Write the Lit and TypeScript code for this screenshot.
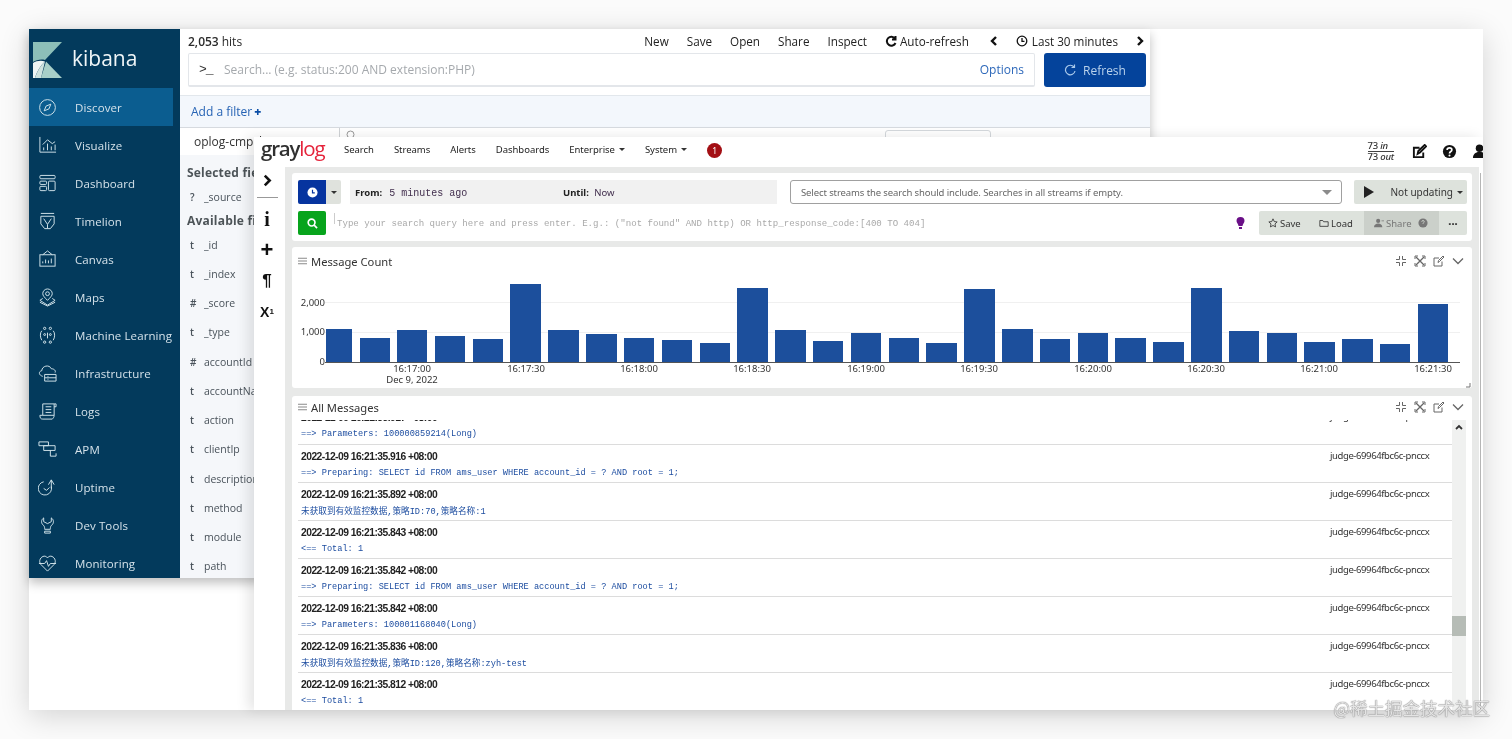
import { LitElement, html, css, svg } from "lit";
import { customElement } from "lit/decorators.js";

const navIcons: Record<string, any> = {
  Discover: svg`<circle cx="10" cy="10" r="8.3"/><path d="M13.5 6.5 11.5 11.5 6.5 13.5 8.5 8.5Z"/>`,
  Visualize: svg`<path d="M2 1v16h17M5 9l5-5 5 4 3-2M6 15v-3M10 15V8M14 15v-4M18 15V9"/>`,
  Dashboard: svg`<rect x="2" y="1.5" width="16" height="3.5" rx="1"/><rect x="2" y="7.5" width="7" height="3.5" rx="1"/><rect x="2" y="13" width="7" height="4.5" rx="1"/><rect x="11" y="7.5" width="7" height="10" rx="1"/>`,
  Timelion: svg`<path d="M3 1.5h14M3 4.5h14v8l-4 5H7l-4-5zM6 7l4 6 4-6M10 13v4"/>`,
  Canvas: svg`<rect x="2" y="5" width="16" height="12"/><path d="M5 5l5-4 5 4M5 14v-2M8 14v-4M11 14v-3M14 14V9"/>`,
  Maps: svg`<circle cx="10" cy="6" r="2"/><path d="M10 13C7 10 5 8 5 6a5 5 0 0 1 10 0c0 2-2 4-5 7ZM5 11l-3 2 8 5 8-5-3-2M2 15l8 4 8-4"/>`,
  "Machine Learning": svg`<circle cx="7" cy="2.5" r="1.2"/><circle cx="13" cy="2.5" r="1.2"/><circle cx="7" cy="17" r="1.2"/><circle cx="13" cy="17" r="1.2"/><circle cx="7" cy="9" r="1"/><circle cx="13" cy="9" r="1"/><path d="M4 5C2 7 2 12 4 15M16 5c2 2 2 7 0 10M10 7v6"/>`,
  Infrastructure: svg`<path d="M5 13C1 12 0 8 4 7c0-5 8-7 10-2 3 0 5 2 4 4M7 11h12v7H7zM7 14.500h12M10 13h1M10 16h1"/>`,
  Logs: svg`<path d="M5 14V2h12v12M5 14H2c0 3 1 4 3 4h10c1-1 2-2 2-4H5M8 5h6M8 8h6M8 11h6M17 2h2v3h-2"/>`,
  APM: svg`<path d="M1 2h10v4H1zM6 6h12v5H6zM13 11v6h6v-3"/>`,
  Uptime: svg`<path d="M14 9a7 7 0 1 1-8-5M11 7l3-5 3 5M14 2v9M6 11l3 2 3-3"/>`,
  "Dev Tools": svg`<path d="M6 2C3 4 3 8 6 10c1 1 1 3 1 4h6c0-1 0-3 1-4 3-2 3-6 0-8v4l-4 2-4-2zM7 16h6v2H7z"/>`,
  Monitoring: svg`<path d="M10 18 3 11C-1 6 6-1 10 4c4-5 11 2 7 7l-7 7ZM1 10h6l2-3 2 6 2-3h6"/>`,
};
const navItems = Object.keys(navIcons);

const fields: [string, string][] = [
  ["t", "_id"], ["t", "_index"], ["#", "_score"], ["t", "_type"], ["#", "accountId"], ["t", "accountName"],
  ["t", "action"], ["t", "clientIp"], ["t", "description"], ["t", "method"], ["t", "module"], ["t", "path"],
];

const bars: [number, number, number][] = [
  [326,26,329],[360,30,338],[397,30,330],[435,30,336],[473,30,339],[510,31,284],[548,31,330],[586,31,334],[624,30,338],[662,30,340],
  [700,30,343],[737,31,288],[775,31,330],[813,30,341],[851,30,333],[889,30,338],[926,31,343],[964,31,289],[1002,31,329],[1040,30,339],
  [1078,30,333],[1115,31,338],[1153,31,342],[1191,31,288],[1229,30,331],[1267,30,333],[1304,31,342],[1342,31,339],[1380,30,344],[1418,30,304],
];
const ticks: [string, number][] = [
  ["16:17:00",412],["16:17:30",526],["16:18:00",639],["16:18:30",752],["16:19:00",866],["16:19:30",979],["16:20:00",1093],["16:20:30",1206],["16:21:00",1319],["16:21:30",1433],
];
const prep = "==> Preparing: SELECT id FROM ams_user WHERE account_id = ? AND root = 1;";
const rows: [string, string][] = [
  ["2022-12-09 16:21:35.917 +08:00", "==> Parameters: 100000859214(Long)"],
  ["2022-12-09 16:21:35.916 +08:00", prep],
  ["2022-12-09 16:21:35.892 +08:00", "未获取到有效监控数据,策略ID:70,策略名称:1"],
  ["2022-12-09 16:21:35.843 +08:00", "<== Total: 1"],
  ["2022-12-09 16:21:35.842 +08:00", prep],
  ["2022-12-09 16:21:35.842 +08:00", "==> Parameters: 100001168040(Long)"],
  ["2022-12-09 16:21:35.836 +08:00", "未获取到有效监控数据,策略ID:120,策略名称:zyh-test"],
  ["2022-12-09 16:21:35.812 +08:00", "<== Total: 1"],
];

const burger = html`<svg class="burger" viewBox="0 0 10 8"><path d="M0 1h10M0 4h10M0 7h10"/></svg>`;
const tools = html`<div class="tools">
  <svg viewBox="0 0 12 12"><path d="M4.500 1v3.500H1M7.500 1v3.500H11M4.500 11V7.500H1M7.500 11V7.500H11"/></svg>
  <svg viewBox="0 0 12 12"><path d="M2 2l8 8M10 2l-8 8" stroke-width="1.300"/><path d="M1 1h3M1 1v3M11 1H8M11 1v3M1 11h3M1 11V8M11 11H8M11 11V8"/></svg>
  <svg viewBox="0 0 12 12"><path d="M9 6.500V11H1V3h5M5 7.500 5.500 5.500 10 1l1 1-4.500 4.500z"/></svg>
  <svg viewBox="0 0 12 12"><path d="M1 3.500l5 5 5-5" stroke-width="1.300"/></svg>
</div>`;

@customElement("app-root")
export class AppRoot extends LitElement {
  static styles = css`
    :host { display: block; height: 739px; background: #fff; overflow: hidden; }
    * { box-sizing: border-box; }
    .stage { position: relative; width: 1512px; height: 739px; filter: blur(0.5px); background: #fbfbfb; font-family: "Open Sans", sans-serif; }
    .sheet { position: absolute; left: 29px; top: 29px; width: 1454px; height: 681px; background: #fff; box-shadow: 0 6px 28px rgba(0,0,0,.16); }

    .kibana { position: absolute; left: 29px; top: 29px; width: 1121px; height: 549px; display: flex; background: #fff; box-shadow: 0 5px 10px rgba(0,0,0,.25); overflow: hidden; }
    .side { width: 151px; background: #033a5c; color: #d5e2ea; flex: none; }
    .brand { height: 59px; display: flex; align-items: center; gap: 9px; padding: 0 0 0 4px; font-family: "Open Sans", sans-serif; font-size: 21px; font-weight: 500; color: #f0f6f8; }
    .brand svg { width: 30px; height: 36px; flex: none; margin-top: 2px; }
    .brand span { margin-top: -1px; }
    .nav-item { height: 38px; width: 144px; display: flex; align-items: center; white-space: nowrap; font-size: 11.500px; padding-left: 9px; gap: 18px; letter-spacing: .1px; }
    .nav-item.active { background: #0b5d90; }
    .nav-item svg { width: 19px; height: 19px; fill: none; stroke: #d5e6ec; stroke-width: 1; flex: none; }

    .kmain { flex: 1; min-width: 0; display: flex; flex-direction: column; }
    .ktop { height: 66px; padding: 0 4px 0 8px; display: grid; grid-template-columns: 1fr 102px; grid-template-rows: 24px 34px; column-gap: 9px; }
    .hits { font-size: 12px; color: #2a2a2a; display: flex; align-items: center; }
    .hits b { font-weight: 600; margin-right: 3px; }
    .menu { grid-column: 1 / 3; display: grid; grid-template-columns: auto 1fr; align-items: center; }
    .menu-links { display: flex; justify-content: flex-end; align-items: center; gap: 18px; font-size: 11.700px; color: #222; }
    .menu-links svg { width: 12px; height: 12px; fill: none; stroke: #111; stroke-width: 2; flex: none; }
    .m-icon { display: flex; align-items: center; gap: 3px; }
    .menu-links .back { margin-left: 1px; }
    .menu-links .range-t { margin-left: -2px; gap: 4px; }
    .menu-links .fwd { margin-left: -2px; }
    .kquery { border: 1px solid #e3e6ea; border-bottom-width: 2px; border-radius: 2px; background: #fff; display: flex; align-items: center; padding: 0 10px; font-size: 12px; color: #a5a9ad; }
    .kquery .prompt { color: #333; font-family: "Liberation Mono", monospace; font-size: 13px; width: 25px; letter-spacing: -1px; }
    .kquery .opt { margin-left: auto; color: #2d68ba; }
    .refresh { background: #04439b; color: #b9d2ec; border-radius: 3px; display: flex; align-items: center; justify-content: center; gap: 7px; font-size: 12px; }
    .refresh svg { width: 12px; height: 12px; fill: none; stroke: #a8c8ea; stroke-width: 1.200; }
    .filters { height: 33px; background: #f3f7fc; border-top: 1px solid #e2e7ec; border-bottom: 1px solid #d6dadf; display: flex; align-items: center; padding-left: 11px; font-size: 12px; color: #2663b4; flex: none; }
    .filters b { font-weight: 800; margin-left: 2px; color: #0a4da5; }
    .kbody { flex: 1; display: flex; min-height: 0; }
    .fields { width: 160px; flex: none; background: #f5f7fa; overflow: hidden; border-right: 1px solid #d0d3d6; }
    .index { height: 27px; background: #fff; display: flex; align-items: center; padding-left: 14px; font-size: 12px; color: #333; white-space: nowrap; overflow: hidden; }
    .fh { font-size: 12px; font-weight: 700; color: #4d5458; padding-left: 7px; height: 23px; display: flex; align-items: center; white-space: nowrap; letter-spacing: .2px; }
    .fh.sel-h { margin-top: 6px; }
    .fh.av-h { height: 20px; }
    .field { height: 29.250px; display: flex; align-items: center; font-size: 10.500px; color: #49525a; padding-left: 10px; white-space: nowrap; }
    .field.src { height: 26px; }
    .field i { font-style: normal; width: 14px; flex: none; font-weight: 600; font-size: 10px; }
    .kright { flex: 1; padding: 2px 0 0 6px; display: flex; align-items: flex-start; }
    .kright svg { width: 10px; height: 10px; fill: none; stroke: #999; }
    .ghost { width: 106px; height: 10px; border: 1px solid #d4d8dc; border-radius: 3px; margin-left: 529px; }

    .gl { position: absolute; left: 254px; top: 137px; width: 1229px; height: 573px; background: #fff; display: flex; flex-direction: column; box-shadow: -6px 0 12px rgba(0,0,0,.1); overflow: hidden; }
    .glnav { height: 30px; flex: none; display: flex; align-items: center; padding: 0 0 5px 7px; font-size: 9.500px; color: #222; font-family: "Noto Sans", sans-serif; }
    .gllogo { font-family: "Open Sans", sans-serif; font-size: 20.500px; line-height: 22px; font-weight: 600; letter-spacing: -1.200px; color: #303030; width: 83px; margin-top: -3px; }
    .gllogo span { color: #e5243b; font-weight: 400; }
    .links { display: flex; gap: 20px; align-items: center; letter-spacing: -.03px; }
    .caret::after { content: ""; display: inline-block; margin-left: 4px; vertical-align: 2px; border: 3px solid transparent; border-top-color: #333; border-bottom: 0; }
    .badge { width: 15px; height: 15px; border-radius: 50%; background: #a30f14; color: #fff; font-size: 8.500px; display: flex; align-items: center; justify-content: center; margin-top: 2px; }
    .navr { margin-left: auto; display: flex; align-items: center; gap: 15px; margin-right: -4px; margin-top: 4px; }
    .thru { font-size: 9.500px; line-height: 10px; font-weight: 500; text-align: left; margin-right: 3px; color: #333; letter-spacing: -.2px; }
    .thru em { font-style: italic; }
    .thru div:first-child { border-bottom: 1px solid #444; }
    .navr svg { width: 15px; height: 15px; flex: none; }

    .glbody { flex: 1; display: flex; min-height: 0; }
    .rail { width: 31px; flex: none; display: flex; flex-direction: column; align-items: center; color: #111; padding-right: 5px; line-height: 1; }
    .rail > * { height: 31px; display: flex; align-items: center; justify-content: center; font-weight: 700; }
    .rail svg { width: 13px; height: 13px; fill: none; stroke: #111; stroke-width: 2.400; }
    .rail .first { border-bottom: 1px solid #999; margin-bottom: 6px; width: 21px; padding-bottom: 4px; flex: none; }
    .rail .ri { font-size: 20px; font-family: "Liberation Serif", serif; height: 30px; }
    .rail .pl { font-size: 22px; font-family: "Liberation Sans", sans-serif; }
    .rail .pa { font-size: 17px; font-family: "Liberation Sans", sans-serif; }
    .rail .x { font-size: 14px; font-family: "Liberation Sans", sans-serif; }
    .rail .x sub { font-size: 8px; vertical-align: -2px; line-height: 0; }

    .glmain { flex: 1; min-width: 0; background: #e8e9e8; padding: 6px 7px 0 7px; border-right: 4px solid #fff; position: relative; display: flex; flex-direction: column; }
    .card { background: #fff; border-radius: 3px; margin-bottom: 6px; }
    .qcard { height: 68px; padding: 7px 5px 0 6px; display: flex; flex-direction: column; gap: 7px; }
    .qrow { height: 24px; display: flex; align-items: stretch; }
    .btn-b { width: 28px; background: #06349f; display: flex; align-items: center; justify-content: center; border-radius: 2px 0 0 2px; }
    .btn-b svg, .btn-g svg { width: 11px; height: 11px; }
    .btn-c { width: 15px; background: #dfe2dd; display: flex; align-items: center; justify-content: center; border-radius: 0 2px 2px 0; }
    .btn-c::after { content: ""; border: 3px solid transparent; border-top-color: #333; border-bottom: 0; }
    .range { width: 427px; margin-left: 9px; background: #f1f1f1; display: flex; align-items: center; padding-left: 5px; font-size: 9.500px; color: #222; font-family: "Noto Sans", sans-serif; }
    .range b { font-weight: 700; }
    .range .from { width: 208px; }
    .mono { font-family: "Liberation Mono", "Noto Sans CJK SC", monospace; }
    .range .v { color: #43304f; margin-left: 7px; font-size: 10px; }
    .range .now { color: #43304f; margin-left: 3px; }
    .sel { width: 552px; margin-left: 13px; border: 1px solid #a0a0a0; border-radius: 3px; display: flex; align-items: center; padding: 0 9px 0 10px; font-size: 9.500px; color: #666; font-family: "Noto Sans", sans-serif; justify-content: space-between; letter-spacing: -.1px; }
    .sel::after { content: ""; border: 5px solid transparent; border-top-color: #8b8b8b; border-bottom: 0; }
    .upd { width: 113px; margin-left: 12px; background: #dde2dc; border-radius: 2px; display: flex; align-items: center; justify-content: space-between; padding: 0 4px 0 10px; font-size: 10px; color: #333; font-family: "Noto Sans", sans-serif; }
    .upd svg { width: 10px; height: 12px; }
    .btn-g { width: 28px; background: #07a41c; border-radius: 2px; display: flex; align-items: center; justify-content: center; }
    .qtext { flex: 1; margin-left: 8px; padding-left: 3px; font-size: 9.080px; color: #a9a9a9; display: flex; align-items: center; white-space: nowrap; position: relative; }
    .qtext::before { content: ""; position: absolute; left: 0; top: 2px; height: 11px; width: 1px; background: #ccc; }
    .bulb { width: 9px; height: 13px; align-self: center; margin-right: 14px; flex: none; }
    .sgroup { width: 208px; flex: none; background: #dde2dc; border-radius: 2px; display: flex; align-items: stretch; font-size: 9.500px; color: #333; font-family: "Noto Sans", sans-serif; }
    .sgroup > div { display: flex; align-items: center; gap: 2px; white-space: nowrap; }
    .sgroup svg { width: 10px; height: 10px; flex: none; }
    .sgroup .q { margin-left: 4px; }
    .s1 { padding-left: 9px; width: 55px; }
    .s2 { width: 50px; padding-left: 5px; }
    .s3 { width: 75px; background: #cbd0ca; padding-left: 10px; color: #777; }
    .s4 { flex: 1; justify-content: center; font-weight: 800; font-size: 11px; }
    .chead { height: 25px; display: flex; align-items: center; padding: 3px 8px 0 6px; font-size: 11.200px; color: #333; font-family: "Noto Sans", sans-serif; gap: 4px; }
    .burger { width: 9px; height: 8px; fill: none; stroke: #8a8a8a; stroke-width: 1.200; }
    .tools { margin-left: auto; display: flex; gap: 7px; }
    .tools svg { width: 12px; height: 12px; fill: none; stroke: #666; stroke-width: 1; }
    .ccard { height: 141px; position: relative; margin-bottom: 8px; }
    .ccard svg.chart { width: 1180px; height: 116px; display: block; }
    .chart text { font-family: "Noto Sans", sans-serif; font-size: 9.500px; fill: #333; }
    .mcard { flex: 1; margin-bottom: 0; min-height: 0; display: flex; flex-direction: column; border-radius: 3px 3px 0 0; }
    .mhead { height: 24px; flex: none; padding-top: 0; padding-bottom: 2px; }
    .mwrap { flex: 1; min-height: 0; display: flex; padding: 0 6px; }
    .mlist { flex: 1; min-width: 0; overflow: hidden; }
    .mrow { height: 38px; border-top: 1px solid #dcdcdc; display: flex; padding-left: 3px; }
    .mrow:first-child { margin-top: -14px; border-top: 0; }
    .mcol { flex: 1; min-width: 0; }
    .ts { font-family: "Liberation Sans", sans-serif; font-weight: 700; font-size: 10.300px; letter-spacing: -.53px; color: #222; height: 21px; padding-top: 1px; display: flex; align-items: center; white-space: nowrap; }
    .msg { font-size: 8.640px; color: #1d4da0; height: 13px; display: flex; align-items: center; white-space: pre; }
    .host { width: 122px; flex: none; font-family: "Noto Sans", sans-serif; font-size: 9.500px; color: #333; padding-top: 4px; height: 19px; white-space: nowrap; letter-spacing: -.4px; }
    .sbar { width: 14px; flex: none; background: #f0f1f0; position: relative; display: flex; justify-content: center; padding-top: 4px; }
    .sbar svg { width: 8px; height: 6px; fill: none; stroke: #333; stroke-width: 1.800; }
    .thumb { position: absolute; left: 0; right: 0; top: 196px; height: 20px; background: #b6bcb6; }
    .edge { position: absolute; right: -2px; top: 6px; bottom: 0; width: 1px; background: #b5b5b5; }

    .mark { position: absolute; right: 22px; top: 695px; font-family: "Noto Sans CJK SC", sans-serif; font-size: 17.500px; color: rgba(255,255,255,.8); text-shadow: 0 0 1px #777, 0 0 1px #777; white-space: nowrap; }
  `;

  render() {
    return html`<div class="stage">
      <div class="sheet"></div>
      <section class="kibana">
        <aside class="side">
          <div class="brand">
            <svg viewBox="0 0 30 36">
              <path d="M0 0h29L12 18C8 17 3 18 0 20z" fill="#8dbfb8"/>
              <path d="M13 19.500 29 36H8z" fill="#a8cfc8"/>
              <path d="M0 21C3 19 8 18 12 19.500 8 23 4 29 2 36H0z" fill="#eef5f4"/>
              <path d="M12 19.500C8 23 4 29 2 36h6z" fill="#cfe3df"/>
            </svg>
            <span>kibana</span>
          </div>
          ${navItems.map((n, i) => html`<div class="nav-item ${i === 0 ? "active" : ""}">
            <svg viewBox="0 0 20 20">${navIcons[n]}</svg><span>${n}</span></div>`)}
        </aside>
        <div class="kmain">
          <div class="ktop">
            <div class="menu">
              <div class="hits"><b>2,053</b> hits</div>
              <div class="menu-links">
                <span>New</span><span>Save</span><span>Open</span><span>Share</span><span>Inspect</span>
                <span class="m-icon"><svg viewBox="0 0 12 12"><path d="M10 3.500A4.500 4.500 0 1 0 10.500 8M10.500 1v3.500H7"/></svg>Auto-refresh</span>
                <svg class="back" viewBox="0 0 12 12"><path d="M8 2 4 6l4 4" stroke-width="2.400"/></svg>
                <span class="m-icon range-t"><svg viewBox="0 0 12 12"><circle cx="6" cy="6" r="4.800" stroke-width="1.300"/><path d="M6 3v3.300h2.500" stroke-width="1.300"/></svg>Last 30 minutes</span>
                <svg class="fwd" viewBox="0 0 12 12"><path d="M4 2l4 4-4 4" stroke-width="2.400"/></svg>
              </div>
            </div>
            <div class="kquery"><span class="prompt">&gt;_</span><span>Search... (e.g. status:200 AND extension:PHP)</span><span class="opt">Options</span></div>
            <div class="refresh"><svg viewBox="0 0 12 12"><path d="M10 3A4.800 4.800 0 1 0 11 7M10.500 .5V3.500H7.500"/></svg>Refresh</div>
          </div>
          <div class="filters">Add a filter<b>+</b></div>
          <div class="kbody">
            <div class="fields">
              <div class="index">oplog-cmp-*</div>
              <div class="fh sel-h">Selected fields</div>
              <div class="field src"><i>?</i>_source</div>
              <div class="fh av-h">Available fields</div>
              ${fields.map(([t, n]) => html`<div class="field"><i>${t}</i>${n}</div>`)}
            </div>
            <div class="kright"><svg viewBox="0 0 10 10"><circle cx="4.500" cy="4.500" r="3.500"/></svg><div class="ghost"></div></div>
          </div>
        </div>
      </section>

      <section class="gl">
        <header class="glnav">
          <div class="gllogo">gray<span>log</span></div>
          <nav class="links">
            <span>Search</span><span>Streams</span><span>Alerts</span><span>Dashboards</span>
            <span class="caret">Enterprise</span><span class="caret">System</span>
            <span class="badge">1</span>
          </nav>
          <div class="navr">
            <div class="thru"><div>73 <em>in</em></div><div>73 <em>out</em></div></div>
            <svg viewBox="0 0 16 16" fill="none" stroke="#111" stroke-width="2"><path d="M12 9v5H2V4h6M6 10.500l.7-3L13.500 1 15 2.500 8.500 9z"/></svg>
            <svg viewBox="0 0 16 16"><circle cx="8" cy="8" r="7" fill="#111"/><path d="M5.500 6.300C5.500 3.500 10.500 3.500 10.500 6.300 10.500 8 8 8 8 10" fill="none" stroke="#fff" stroke-width="1.800"/><circle cx="8" cy="12.300" r="1.100" fill="#fff"/></svg>
            <svg viewBox="0 0 16 16" fill="#111"><circle cx="8" cy="4.500" r="4"/><path d="M1 15c0-9 14-9 14 0z"/></svg>
          </div>
        </header>
        <div class="glbody">
          <div class="rail">
            <div class="first"><svg viewBox="0 0 12 12"><path d="M3.500 1.500 8 6l-4.500 4.500"/></svg></div>
            <div class="ri">i</div>
            <div class="pl">+</div>
            <div class="pa">¶</div>
            <div class="x">X<sub>1</sub></div>
          </div>
          <main class="glmain">
            <div class="card qcard">
              <div class="qrow">
                <div class="btn-b"><svg viewBox="0 0 12 12"><circle cx="6" cy="6" r="5.500" fill="#fff"/><path d="M6 3v3.500h2.500" fill="none" stroke="#06349f" stroke-width="1.300"/></svg></div>
                <div class="btn-c"></div>
                <div class="range">
                  <div class="from"><b>From:</b><span class="mono v">5 minutes ago</span></div>
                  <div><b>Until:</b> <span class="now">Now</span></div>
                </div>
                <div class="sel"><span>Select streams the search should include. Searches in all streams if empty.</span></div>
                <div class="upd"><svg viewBox="0 0 10 12"><path d="M0 0l10 6-10 6z" fill="#222"/></svg><span class="caret">Not updating</span></div>
              </div>
              <div class="qrow">
                <div class="btn-g"><svg viewBox="0 0 12 12" fill="none" stroke="#fff" stroke-width="1.800"><circle cx="5" cy="5" r="3.700"/><path d="M7.800 7.800 11 11"/></svg></div>
                <div class="qtext mono">Type your search query here and press enter. E.g.: ("not found" AND http) OR http_response_code:[400 TO 404]</div>
                <svg class="bulb" viewBox="0 0 9 13"><path d="M4.500 0a4 4 0 0 1 4 4c0 2-2 3-2 5H2.500c0-2-2-3-2-5a4 4 0 0 1 4-4z" fill="#6a0f87"/><path d="M3 10h3v2H3z" fill="#6a0f87"/></svg>
                <div class="sgroup">
                  <div class="s1"><svg viewBox="0 0 12 12" fill="none" stroke="#333"><path d="M6 1l1.500 3.300 3.500.4-2.600 2.400.7 3.600L6 9l-3.100 1.700.7-3.600L1 4.700l3.500-.4z"/></svg>Save</div>
                  <div class="s2"><svg viewBox="0 0 12 12" fill="none" stroke="#333"><path d="M1 3h3.500l1 1.500H11V10H1z"/></svg>Load</div>
                  <div class="s3"><svg viewBox="0 0 12 12" fill="#777"><circle cx="5" cy="3.500" r="2.500"/><path d="M0 11c0-6 10-6 10 0zM9 3h3v1H9z"/></svg>Share<svg class="q" viewBox="0 0 12 12"><circle cx="6" cy="6" r="5.500" fill="#777"/><path d="M4.500 4.500c0-2 3-2 3 0 0 1-1.500 1-1.500 2.500" fill="none" stroke="#cbd0ca" stroke-width="1.200"/></svg></div>
                  <div class="s4">···</div>
                </div>
              </div>
            </div>

            <div class="card ccard">
              <div class="chead">${burger}<span>Message Count</span>${tools}</div>
              <svg class="chart" viewBox="292 272 1180 116">
                <path d="M325 302.500H1460M325 332.500H1460" stroke="#f0f0f0"/>
                ${bars.map(([x, w, t]) => svg`<rect x=${x} y=${t} width=${w} height=${362 - t} fill="#1c4f9c"/>`)}
                <path d="M325 362.500H1460" stroke="#555"/>
                <text x="325" y="306" text-anchor="end">2,000</text>
                <text x="325" y="335" text-anchor="end">1,000</text>
                <text x="325" y="365" text-anchor="end">0</text>
                ${ticks.map(([l, x]) => svg`<text x=${x} y="372" text-anchor="middle">${l}</text>`)}
                <text x="412" y="383" text-anchor="middle">Dec 9, 2022</text>
                <path d="M1470 383v4h-4" fill="none" stroke="#777"/>
              </svg>
            </div>

            <div class="card mcard">
              <div class="chead mhead">${burger}<span>All Messages</span>${tools}</div>
              <div class="mwrap">
                <div class="mlist">
                  ${rows.map(([ts, m]) => html`<div class="mrow">
                    <div class="mcol"><div class="ts">${ts}</div><div class="msg mono">${m}</div></div>
                    <div class="host">judge-69964fbc6c-pnccx</div>
                  </div>`)}
                </div>
                <div class="sbar"><svg viewBox="0 0 8 6"><path d="M1 5l3-3 3 3"/></svg><div class="thumb"></div></div>
              </div>
            </div>
            <div class="edge"></div>
          </main>
        </div>
      </section>
      <div class="mark">@稀土掘金技术社区</div>
    </div>`;
  }
}
